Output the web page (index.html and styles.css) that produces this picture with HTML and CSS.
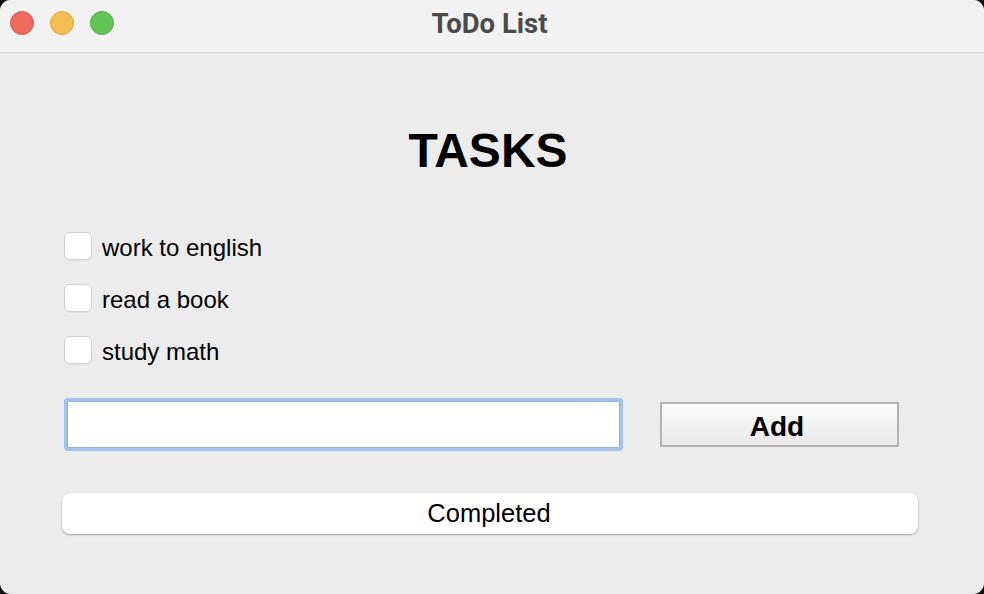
FILE: index.html
```html
<!DOCTYPE html>
<html lang="en">
<head>
<meta charset="utf-8">
<title>ToDo List</title>
<link rel="stylesheet" href="styles.css">
</head>
<body>
<div class="window">
  <div class="titlebar">
    <div class="lights">
      <span class="light red"></span>
      <span class="light yellow"></span>
      <span class="light green"></span>
    </div>
    <div class="title">ToDo List</div>
  </div>
  <div class="content">
    <h1 class="heading">TASKS</h1>
    <ul class="tasks">
      <li class="task"><span class="box"></span><span class="label">work to english</span></li>
      <li class="task"><span class="box"></span><span class="label">read a book</span></li>
      <li class="task"><span class="box"></span><span class="label">study math</span></li>
    </ul>
    <div class="entry">
      <input class="field" type="text" value="">
      <button class="add">Add</button>
    </div>
    <div class="completed">Completed</div>
  </div>
</div>
</body>
</html>
```

FILE: styles.css
```css
html, body {
  margin: 0;
  padding: 0;
  background: #111;
}
body {
  font-family: "Liberation Sans", Arial, sans-serif;
  width: 984px;
  height: 594px;
  overflow: hidden;
}
.window {
  width: 984px;
  height: 594px;
  border-radius: 11px;
  overflow: hidden;
  background: #ececec;
  display: flex;
  flex-direction: column;
}
.titlebar {
  position: relative;
  height: 52px;
  flex: 0 0 52px;
  background: #f2f2f2;
  border-bottom: 1px solid #d3d3d3;
  display: flex;
  align-items: center;
  justify-content: center;
}
.lights {
  position: absolute;
  left: 10px;
  top: 11px;
  display: flex;
  gap: 16px;
}
.light {
  width: 22px;
  height: 22px;
  border-radius: 50%;
  border: 1px solid rgba(0,0,0,0.12);
}
.red { background: #ee6a5f; border-color: #d9574c; }
.yellow { background: #f5bd4f; border-color: #dea43a; }
.green { background: #61c454; border-color: #51ad45; }
.title {
  font-family: Roboto, "Liberation Sans", sans-serif;
  font-weight: 700;
  font-size: 27.5px;
  color: #4b4b4b;
  margin-top: -5px;
  margin-left: -5px;
}
.content {
  flex: 1;
  padding: 0 66px 0 62px;
}
.heading {
  margin: 70px 0 0 0;
  font-size: 48px;
  line-height: 56px;
  font-weight: 700;
  text-align: center;
  color: #000;
  padding-right: 4px;
}
.tasks {
  list-style: none;
  margin: 53px 0 0 0;
  padding: 0 0 0 2px;
  display: flex;
  flex-direction: column;
  gap: 24px;
}
.task {
  display: flex;
  align-items: flex-start;
  height: 28px;
}
.box {
  width: 26px;
  height: 26px;
  background: #fff;
  border: 1px solid #cfcfcf;
  border-radius: 6px;
  box-shadow: 0 1px 0 rgba(0,0,0,0.04);
}
.label {
  margin-left: 10px;
  font-size: 24px;
  line-height: 28px;
  padding-top: 2px;
  color: #000;
}
.entry {
  margin-top: 34px;
  padding-left: 2px;
  display: flex;
  align-items: center;
  gap: 37px;
}
.field {
  box-sizing: border-box;
  width: 559px;
  height: 53px;
  margin: 0;
  border: 3px solid #a2c2ef;
  border-radius: 4px;
  background: #fff;
  outline: none;
  box-shadow: inset 0 0 0 1px #93b5e6;
}
.add {
  box-sizing: border-box;
  width: 239px;
  height: 45px;
  margin: 0;
  border: 2px solid #b2b2b2;
  background: linear-gradient(#fbfbfb, #e9e9e9);
  font-family: "Liberation Sans", Arial, sans-serif;
  font-size: 28px;
  font-weight: 700;
  color: #000;
  padding: 4px 5px 0 0;
}
.completed {
  margin-top: 42px;
  width: 856px;
  height: 41px;
  box-sizing: border-box;
  background: #fff;
  border-radius: 8px;
  box-shadow: 0 1px 2px rgba(0,0,0,0.3), 0 0 0 0.5px rgba(0,0,0,0.06);
  font-size: 25.5px;
  line-height: 41px;
  text-align: center;
  color: #000;
  padding-right: 2px;
}
```
